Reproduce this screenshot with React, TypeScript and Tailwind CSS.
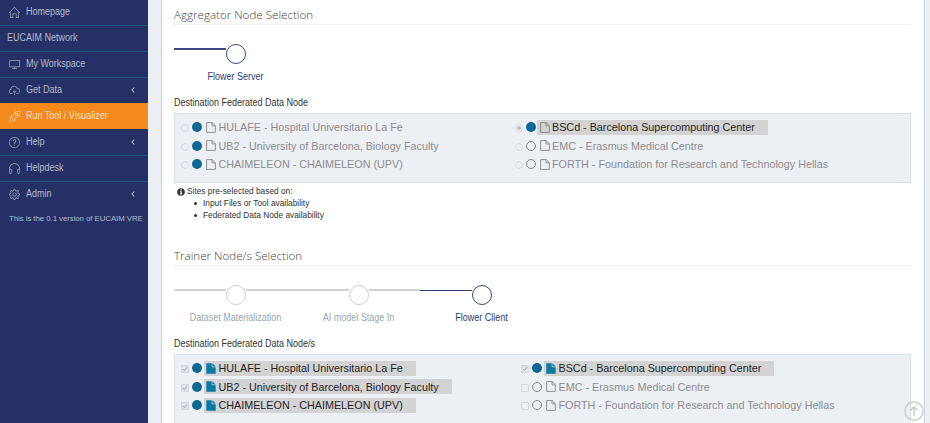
import { ReactNode } from "react";
import { SlHome, SlScreenDesktop, SlCloudUpload, SlRocket, SlQuestion, SlEarphones, SlSettings } from "react-icons/sl";

type NavItem = { label: string; icon?: ReactNode; arrow?: boolean; active?: boolean };
type Site = { name: string; available: boolean; selected?: boolean; checked?: boolean };

const nav: NavItem[] = [
  { label: "Homepage", icon: <SlHome /> },
  { label: "EUCAIM Network" },
  { label: "My Workspace", icon: <SlScreenDesktop /> },
  { label: "Get Data", icon: <SlCloudUpload />, arrow: true },
  { label: "Run Tool / Visualizer", icon: <SlRocket />, active: true },
  { label: "Help", icon: <SlQuestion />, arrow: true },
  { label: "Helpdesk", icon: <SlEarphones /> },
  { label: "Admin", icon: <SlSettings />, arrow: true },
];

const HULAFE = "HULAFE - Hospital Universitario La Fe";
const UB2 = "UB2 - University of Barcelona, Biology Faculty";
const CHAIMELEON = "CHAIMELEON - CHAIMELEON (UPV)";
const BSC = "BSCd - Barcelona Supercomputing Center";
const EMC = "EMC - Erasmus Medical Centre";
const FORTH = "FORTH - Foundation for Research and Technology Hellas";

const right = (checked: boolean): Site[] => [
  { name: BSC, available: true, selected: true, checked },
  { name: EMC, available: false },
  { name: FORTH, available: false },
];
const left = (selected: boolean): Site[] =>
  [HULAFE, UB2, CHAIMELEON].map((name) => ({ name, available: true, selected, checked: selected }));

function Sidebar() {
  return (
    <aside className="h-[423px] w-[148px] shrink-0 overflow-hidden bg-[#243066] text-[10px] text-[#b4bcc8]">
      <nav className="-mt-px">
        {nav.map((item, i) => (
          <div
            key={item.label}
            className={`flex h-[26px] items-center border-t pb-px ${item.icon ? "pl-[9px]" : "pl-[7px]"} ${
              item.active ? "border-[#f58a1c] bg-[#f58a1c] text-[#f3dfc6]" : i === 5 || i === 0 ? "border-[#243066]" : "border-[#1f5283]"
            }`}
          >
            {item.icon && <span className="mr-[6px] block text-[11px] leading-none opacity-85 [&>svg]:block">{item.icon}</span>}
            <span className="origin-left scale-x-90 leading-[14px] whitespace-nowrap">{item.label}</span>
            {item.arrow && (
              <svg className="mr-[13px] ml-auto h-[6px] w-[4px]" viewBox="0 0 4 6" fill="none" stroke="currentColor" strokeWidth="1.1">
                <path d="M3.3.5 1 3l2.3 2.5" />
              </svg>
            )}
          </div>
        ))}
      </nav>
      <p className="mt-[5px] pl-[9px] text-[7.8px] leading-[14px] tracking-[-0.04px] whitespace-nowrap">This is the 0.1 version of EUCAIM VRE</p>
    </aside>
  );
}

function Heading({ children }: { children: ReactNode }) {
  return (
    <h2 className="h-[25px] border-b border-[#f1f1f1] font-['Open_Sans',sans-serif] text-[11.6px] leading-[30px] font-light text-[#444]">
      {children}
    </h2>
  );
}

function Steps({ steps, thick }: { steps: { label: string; active: boolean }[]; thick?: boolean }) {
  return (
    <div className="flex">
      {steps.map((s) => (
        <div key={s.label} className={`flex w-[123px] flex-col ${s.active ? "text-[#2f3b75]" : "text-[#98a8ab]"}`}>
          <div className="flex h-[20px]">
            <div
              className={`w-[52px] ${
                s.active ? (thick ? "mt-[4px] h-[2px] bg-[#3d487e]" : "mt-[5px] h-[1px] bg-[#2f3b75]") : "mt-[4px] h-[2px] bg-[#d2d2d2]"
              }`}
            />
            <div
              className={`-ml-[0.5px] size-[20px] shrink-0 rounded-full border-[1.3px] bg-white ${
                s.active ? "border-[#3d487e]" : "border-[#cfcfcf]"
              }`}
            />
            {!s.active && <div className="mt-[4px] h-[2px] flex-1 bg-[#d2d2d2]" />}
          </div>
          <span className="mt-[6px] scale-x-90 text-center text-[10px] leading-[14px] whitespace-nowrap">{s.label}</span>
        </div>
      ))}
    </div>
  );
}

function Control({ radio, checked }: { radio?: boolean; checked?: boolean }) {
  if (radio)
    return (
      <span className="flex size-[8px] shrink-0 items-center justify-center rounded-full border border-[#d9dce0]">
        {checked && <span className="size-[4px] rounded-full bg-[#bfc3c7]" />}
      </span>
    );
  return (
    <span className={`size-[8px] shrink-0 rounded-[1px] border border-[#d5d8dc] ${checked ? "bg-[#dfe1e4]" : ""}`}>
      {checked && (
        <svg viewBox="0 0 6 6" fill="none" stroke="#aaa" strokeWidth="1">
          <path d="m1 3 1.5 1.5L5 1.2" />
        </svg>
      )}
    </span>
  );
}

function FileIcon({ solid }: { solid: boolean }) {
  return (
    <svg className="h-[11px] w-[10px] shrink-0" viewBox="0 0 10 11">
      {solid ? (
        <path d="M.3.3h5.4v4h4v6.5H.3zM6.4.3l3.3 3.3H6.4z" fill="#087aa4" />
      ) : (
        <path d="M.6.6h5.6l3.1 3v6.8H.6zM6 .6v3.3h3.3" fill="none" stroke="#868686" strokeWidth=".9" />
      )}
    </svg>
  );
}

function SiteRow({ site, radio }: { site: Site; radio?: boolean }) {
  return (
    <div className="flex h-[18.5px] items-center">
      <span className="mt-[2px] flex">
        <Control radio={radio} checked={site.checked} />
      </span>
      <span
        className={`ml-[3px] size-[10px] shrink-0 rounded-full ${
          site.available ? "bg-[#0e6795]" : "border-[1.3px] border-[#858585]"
        }`}
      />
      <span
        className={`ml-[1.5px] flex h-[15px] items-center gap-[2.5px] pl-[2.5px] text-[10.78px] whitespace-nowrap ${
          site.selected ? "bg-[#d3d3d3] pr-[13px] text-[#1f1f1f]" : "text-[#8c8c8c]"
        }`}
      >
        <FileIcon solid={!!site.selected && !radio} />
        <span>{site.name}</span>
      </span>
    </div>
  );
}

function SitePanel({ radio }: { radio?: boolean }) {
  return (
    <div className="flex h-[70px] border border-[#d7e1e8] bg-[#ecf0f5] pt-[4px] pl-[6px]">
      <div className={radio ? "w-[333.5px]" : "w-[340px]"}>
        {left(!radio).map((s) => (
          <SiteRow key={s.name} site={s} radio={radio} />
        ))}
      </div>
      <div>
        {right(true).map((s) => (
          <SiteRow key={s.name} site={s} radio={radio} />
        ))}
      </div>
    </div>
  );
}

export default function App() {
  return (
    <div className="relative flex h-[423px] w-[930px] overflow-hidden bg-[#ecf0f5] font-['Liberation_Sans',Arial,sans-serif]">
      <Sidebar />
      <main className="ml-[13px] h-[423px] w-[764px] border-x border-[#ccd3e0] bg-white pr-[13px] pl-[12px]">
        <section className="h-[241px]">
          <Heading>Aggregator Node Selection</Heading>
          <div className="pt-[19px]">
            <Steps thick steps={[{ label: "Flower Server", active: true }]} />
          </div>
          <p className="mt-[10px] h-[19px] origin-left scale-x-90 text-[10px] leading-[18px] text-[#333]">Destination Federated Data Node</p>
          <SitePanel radio />
          <div className="pt-[3px] pl-[3px] text-[8.33px] leading-[11.8px] text-[#333]">
            <div className="flex items-center">
              <svg className="mr-[2px] size-[8px]" viewBox="0 0 8 8">
                <circle cx="4" cy="4" r="3.8" fill="#333" />
                <path d="M3.4 1.3h1.3v1.1H3.4zM3 3.2h1.7v2.6h.5v.8H2.9v-.8h.5V4H3z" fill="#fff" />
              </svg>
              Sites pre-selected based on:
            </div>
            <ul className="pl-[17px]">
              {["Input Files or Tool availability", "Federated Data Node availability"].map((t) => (
                <li key={t} className="flex items-center">
                  <span className="mr-[6.5px] size-[2.5px] rounded-full bg-[#333]" />
                  {t}
                </li>
              ))}
            </ul>
          </div>
        </section>
        <section>
          <Heading>Trainer Node/s Selection</Heading>
          <div className="pt-[19px]">
            <Steps
              steps={[
                { label: "Dataset Materialization", active: false },
                { label: "AI model Stage In", active: false },
                { label: "Flower Client", active: true },
              ]}
            />
          </div>
          <p className="mt-[10px] h-[19px] origin-left scale-x-90 text-[10px] leading-[18px] text-[#333]">Destination Federated Data Node/s</p>
          <SitePanel />
        </section>
      </main>
      <svg className="absolute top-[401px] left-[904px] size-[20px]" viewBox="0 0 20 20" fill="none" stroke="#c4c8cd" strokeWidth="1.3">
        <circle cx="10" cy="10" r="9.2" />
        <path d="M10 14.8V6M6.5 9.3 10 5.8l3.5 3.5" />
      </svg>
    </div>
  );
}
